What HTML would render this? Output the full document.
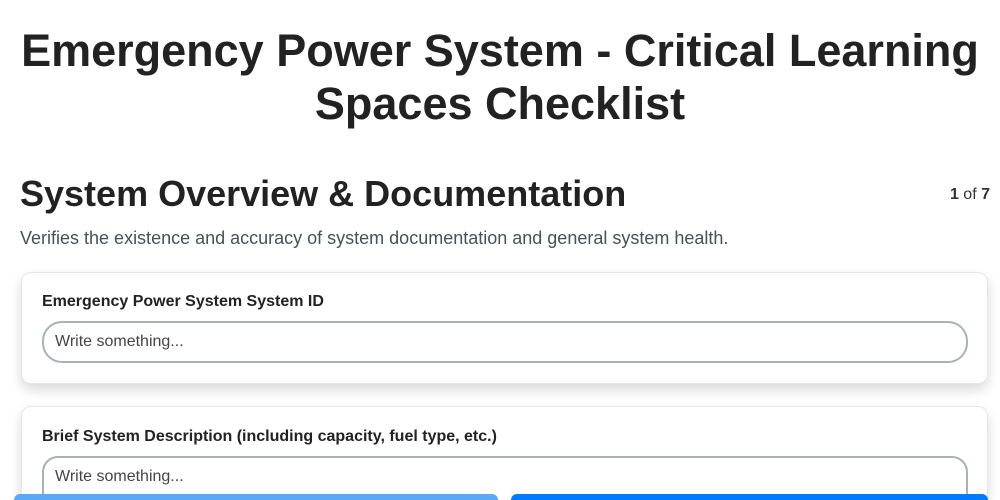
<!DOCTYPE html>
<html style="width:1000px;height:500px;overflow:hidden"><head><style>
*{box-sizing:border-box;margin:0;padding:0}
body{width:1000px;height:500px;overflow:hidden;background:#fff;font-family:"Liberation Sans",sans-serif;color:#212529;position:relative}
h1{position:absolute;top:24px;left:0;width:1000px;text-align:center;font-size:45px;line-height:53px;font-weight:700;color:#222}
h2{position:absolute;top:173px;left:20px;font-size:36px;font-weight:700;color:#222}
.pg{position:absolute;top:186px;right:10px;font-size:16px;color:#333}
.desc{position:absolute;top:228px;left:20px;font-size:18px;color:#495057}
.card{position:absolute;left:21px;width:967px;background:#fff;border:1px solid #e6e6ea;border-radius:10px;box-shadow:0 6px 12px rgba(0,0,0,.15);overflow:hidden}
.lbl{position:absolute;left:20px;font-size:16px;font-weight:700;color:#222}
.inp{position:absolute;left:20px;width:926px;border:2px solid #a9b0b8;border-radius:20px;font-size:16px;color:#444;padding:10px 11px}
.btn{position:absolute;top:494px;height:6px;border-radius:20px 20px 0 0}
</style></head><body>
<h1>Emergency Power System - Critical Learning<br>Spaces Checklist</h1>
<h2>System Overview &amp; Documentation</h2>
<div class="pg"><b>1</b> of <b>7</b></div>
<div class="desc">Verifies the existence and accuracy of system documentation and general system health.</div>
<div class="card" style="top:272px;height:112px">
<div class="lbl" style="top:20px">Emergency Power System System ID</div>
<div class="inp" style="top:48px;height:42px">Write something...</div>
</div>
<div class="card" style="top:406px;height:94px;border-bottom:none;border-radius:10px 10px 0 0">
<div class="lbl" style="top:21px">Brief System Description (including capacity, fuel type, etc.)</div>
<div class="inp" style="top:49px;height:80px;border-radius:16px">Write something...</div>
</div>
<div class="btn" style="left:14px;width:484px;background:#5aa9f7"></div>
<div class="btn" style="left:511px;width:477px;background:#007bff"></div>
</body></html>
